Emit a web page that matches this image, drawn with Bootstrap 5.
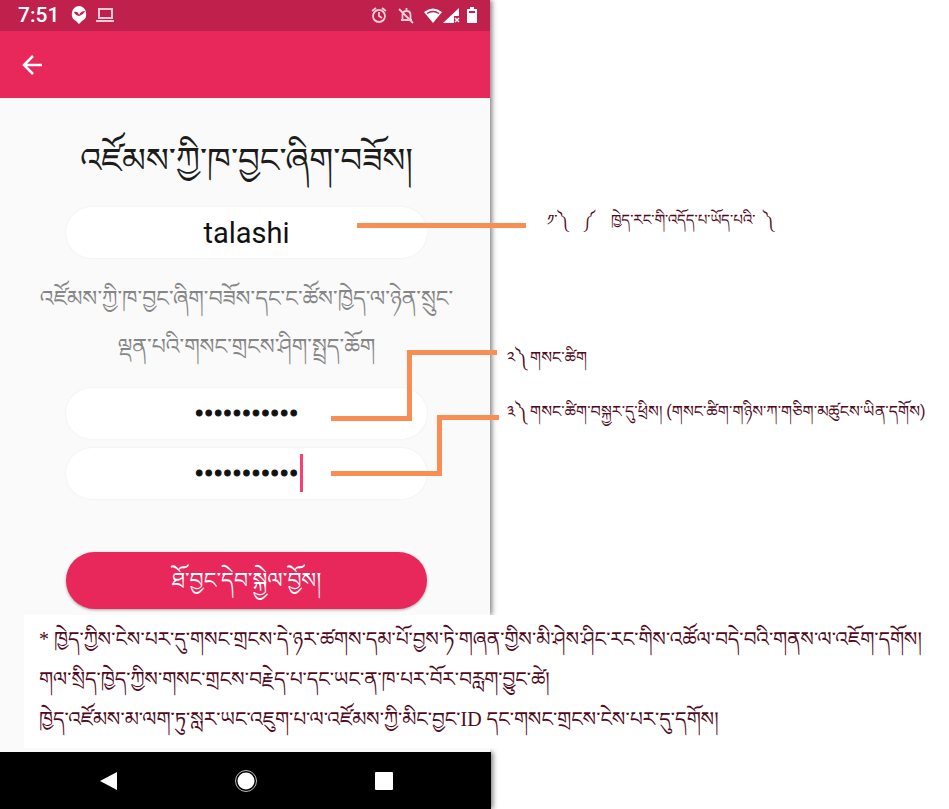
<!DOCTYPE html>
<html lang="bo">
<head>
<meta charset="utf-8">
<meta name="viewport" content="width=device-width, initial-scale=1">
<title>འཛོམས།</title>
<link rel="stylesheet" href="https://cdn.jsdelivr.net/npm/bootstrap@5.3.0/dist/css/bootstrap.min.css">
<style>
:root { --phone: 490px; --pink: #e8275b; --maroon: #4f0a20; --orange: #f98e54; }
body { background: #fff; font-family: Roboto, "Noto Serif Tibetan", "Noto Sans Tibetan", "Microsoft Himalaya", sans-serif; }
.handset { flex: 0 0 var(--phone); min-width: 0; background: #fafafa; box-shadow: 2px 0 5px rgba(0,0,0,.5); }
.statusbar { height: 31px; background: #bf204c; color: #fff; padding: 0 12px 0 18px; }
.clock { font-size: 21px; font-weight: 500; line-height: 31px; }
.appbar { height: 67px; background: var(--pink); padding-left: 20px; }
.screen { padding: 32px 63px 6px 66px; }
.headline { font-size: 34px; line-height: 60px; color: #1c1c1c; margin: 0 0 17px; font-weight: 400; white-space: nowrap; }
.pill { height: 51px; border: 0; border-radius: 26px; background: #fff; box-shadow: 0 0 2px rgba(0,0,0,.08); color: #111; font-size: 29px; padding: 0; }
.secret { font-size: 28px; -webkit-text-stroke: 1px #111; }
.again { margin-top: 9px; }
.hint { font-size: 22px; line-height: 48px; color: #868686; margin: 17px -30px; white-space: nowrap; }
.caret { width: 3px; height: 38px; left: 234px; top: 6px; background: #ff3c72; }
.register { height: 57px; border-radius: 29px; background: var(--pink); color: #fff; font-size: 22px; line-height: 32px; margin-top: 53px; box-shadow: 0 1px 3px rgba(0,0,0,.35); }
.register:hover { background: #d51f50; color: #fff; }
.leads { left: 0; top: 0; width: 530px; height: 500px; pointer-events: none; }
.captions { color: var(--maroon); padding-left: 17px; font-size: 16px; line-height: 30px; white-space: nowrap; }
.captions li:nth-child(1) { margin: 205px 0 0 40px; font-size: 15px; }
.captions li:nth-child(2) { margin-top: 108px; }
.captions li:nth-child(3) { margin-top: 24px; }
.num { display: inline-block; width: 23px; }
.captions li:nth-child(1) .num { width: 36px; }
.open { display: inline-block; width: 28px; }
.strip { background: linear-gradient(#fafafa, #fafafa) 0 0 / var(--phone) 100% no-repeat; padding: 0 0 4px 24px; }
.notice { background: #fff; color: var(--maroon); font-family: "Liberation Serif", "Noto Serif Tibetan", serif; font-size: 20px; line-height: 40px; padding: 4px 0 9px 15px; white-space: nowrap; }
.keys { width: 491px; height: 57px; background: #000; padding: 0 97px 0 98px; box-shadow: 2px 0 5px rgba(0,0,0,.5); }
.key { border: 0; background: none; padding: 0; line-height: 0; }
</style>
</head>
<body>
<main class="position-relative">
  <div class="d-flex">
    <section class="handset">
      <div class="statusbar d-flex align-items-center">
        <span class="clock">7:51</span>
        <svg class="ms-2" width="24" height="20" viewBox="0 0 24 20"><path d="M12 0a8 8 0 0 1 3 15l-3 3-3-3A8 8 0 0 1 12 0z" fill="#fff"/><path d="M7 6q4-1 5 3 2-4 6-4-1 3-6 5-4-1-5-4z" fill="#bf204c"/></svg>
        <svg class="ms-1" width="20" height="16" viewBox="0 0 20 16" fill="none" stroke="#f6cbd7" stroke-width="2"><path d="M4 1h13v9H4zM1 13h18"/></svg>
        <svg class="ms-auto" width="108" height="20" viewBox="0 0 108 20">
          <g fill="none" stroke="#f7cdd8" stroke-width="1.800"><circle cx="9" cy="10" r="6"/><path d="M9 6v4l3 2M2 5l4-3M16 5l-4-3"/><path d="M31 14h11M32.500 13V9q0-4 4-4t4 4v5M36.500 2v3M29 3l14 14"/></g>
          <path d="M54 6q9-7 18 0l-9 11z" fill="#fff"/><path d="M57 7.500q6-4 12 0" fill="none" stroke="#bf204c" stroke-width="1.500"/>
          <path d="M89 2v8h-5v7H73z" fill="#fff"/><path d="m85 12 4 4m0-4-4 4" stroke="#fff" stroke-width="1.500"/>
          <path d="M97 3h3V1h4v2h3v14H97V3z" fill="#fff"/><path d="M99 6h6" stroke="#bf204c" stroke-width="2"/>
        </svg>
      </div>
      <header class="appbar d-flex align-items-center">
        <button class="key" type="button" aria-label="Back"><svg width="24" height="22" viewBox="0 0 24 22" fill="none" stroke="#fff" stroke-width="2.500"><path d="M22 11H5M13 2l-9 9 9 9"/></svg></button>
      </header>
      <form class="screen text-center">
        <h1 class="headline">འཛོམས་ཀྱི་ཁ་བྱང་ཞིག་བཟོས།</h1>
        <input class="pill form-control text-center" type="text" value="talashi" aria-label="ཁྱེད་རང་གི་འདོད་པ་ཡོད་པའི་">
        <p class="hint">འཛོམས་ཀྱི་ཁ་བྱང་ཞིག་བཟོས་དང་ང་ཚོས་ཁྱེད་ལ་ཉེན་སྲུང་<br>ལྡན་པའི་གསང་གྲངས་ཤིག་སྤྲད་ཆོག</p>
        <input class="pill secret form-control text-center" type="password" value="talashi1234" aria-label="གསང་ཚིག">
        <div class="again position-relative">
          <input class="pill secret form-control text-center" type="password" value="talashi1234" aria-label="གསང་ཚིག་བསྐྱར་དུ་ཕྲིས།">
          <span class="caret position-absolute"></span>
        </div>
        <button class="register btn w-100" type="button">ཐོ་བྱང་དེབ་སྐྱེལ་བྱོས།</button>
      </form>
    </section>
    <ol class="captions list-unstyled mb-0">
      <li><span class="num">༡་༽</span><span class="open">༼</span>ཁྱེད་རང་གི་འདོད་པ་ཡོད་པའི་&nbsp; ༽</li>
      <li><span class="num">༢༽</span>གསང་ཚིག</li>
      <li><span class="num">༣༽</span>གསང་ཚིག་བསྐྱར་དུ་ཕྲིས། (གསང་ཚིག་གཉིས་ཀ་གཅིག་མཚུངས་ཡིན་དགོས)</li>
    </ol>
  </div>
  <div class="strip position-relative">
    <div class="notice">* ཁྱེད་ཀྱིས་ངེས་པར་དུ་གསང་གྲངས་དེ་ཉར་ཚགས་དམ་པོ་བྱས་ཏེ་གཞན་གྱིས་མི་ཤེས་ཤིང་རང་གིས་འཚོལ་བདེ་བའི་གནས་ལ་འཇོག་དགོས།<br>གལ་སྲིད་ཁྱེད་ཀྱིས་གསང་གྲངས་བརྗེད་པ་དང་ཡང་ན་ཁ་པར་བོར་བརླག་བྱུང་ཚེ།<br>ཁྱེད་འཛོམས་མ་ལག་ཏུ་སླར་ཡང་འཇུག་པ་ལ་འཛོམས་ཀྱི་མིང་བྱང་ID དང་གསང་གྲངས་ངེས་པར་དུ་དགོས།</div>
  </div>
  <nav class="keys d-flex align-items-center justify-content-between">
    <button class="key" type="button" aria-label="Back"><svg width="20" height="20" viewBox="0 0 20 20"><path d="M19 1v18L2 10z" fill="#fff"/></svg></button>
    <button class="key" type="button" aria-label="Home"><svg width="24" height="24" viewBox="0 0 24 24"><circle cx="12" cy="12" r="10.500" fill="none" stroke="#bbb"/><circle cx="12" cy="12" r="8.500" fill="#fff"/></svg></button>
    <button class="key" type="button" aria-label="Recents"><svg width="20" height="20" viewBox="0 0 20 20"><rect x="1" y="1" width="18" height="18" rx="1" fill="#fff"/></svg></button>
  </nav>
  <svg class="leads position-absolute" viewBox="0 0 530 500" fill="none" stroke="#f98e54" stroke-width="5"><path d="M357 225.500H526M331 418.500H409.500V352.500H497M331 473.500H439.500V417.500H499"/></svg>
</main>
<script src="https://cdn.jsdelivr.net/npm/bootstrap@5.3.0/dist/js/bootstrap.bundle.min.js"></script>
</body>
</html>
